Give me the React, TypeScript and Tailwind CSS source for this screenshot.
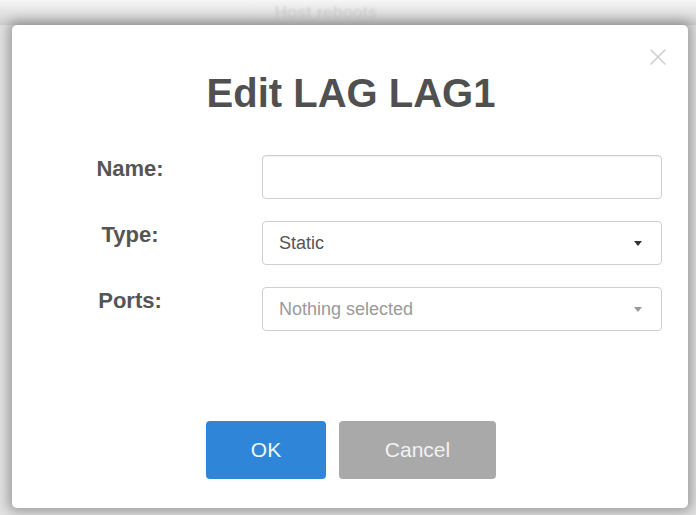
import React from "react";

function Caret({ muted }: { muted?: boolean }) {
  return (
    <span
      className={
        "inline-block h-0 w-0 border-x-[4px] border-t-[5px] border-x-transparent " +
        (muted ? "border-t-[#9a9a9a]" : "border-t-[#333]")
      }
    />
  );
}

function FieldRow({ label, children }: { label: string; children: React.ReactNode }) {
  return (
    <div className="flex items-start">
      <div className="w-[136px] ml-[50px] pt-[3px] text-center text-[22px] leading-[22px] font-bold text-[#555]">
        {label}
      </div>
      <div className="ml-[64px] w-[400px]">{children}</div>
    </div>
  );
}

export default function App() {
  return (
    <div
      className="relative w-[696px] h-[515px] overflow-hidden bg-[#e2e2e2] flex flex-col"
      style={{ fontFamily: '"Liberation Sans", Arial, sans-serif' }}
    >
      {/* page header showing through behind the dialog */}
      <div className="h-[25px] flex items-start justify-center pt-[4px] bg-gradient-to-b from-[#f6f6f6] to-[#cfcfcf]">
        <span className="text-[17px] leading-[18px] tracking-[0.5px] text-[#cdcdcd] blur-[1px] mr-[44px]">
          Host reboots
        </span>
      </div>

      <div className="relative ml-[12px] mr-[8px] h-[483px] bg-white rounded-[5px] shadow-[0_0_12px_4px_rgba(0,0,0,0.3)] flex flex-col">
        {/* close button */}
        <button className="absolute right-[20px] top-[22px] w-[20px] h-[20px] flex items-center justify-center">
          <svg width="18" height="18" viewBox="0 0 18 18">
            <path d="M2 2 L16 16 M16 2 L2 16" stroke="#cfcfcf" strokeWidth="1.6" strokeLinecap="round" />
          </svg>
        </button>

        <h1 className="pt-[48px] text-center text-[40px] leading-[40px] font-bold text-[#505050] ml-[2px]">
          Edit LAG LAG1
        </h1>

        <div className="mt-[42px] flex flex-col gap-[22px]">
          <FieldRow label="Name:">
            <div className="h-[44px] rounded-[4px] border border-[#cfcfcf] bg-white shadow-[inset_0_1px_1px_rgba(0,0,0,0.06)]" />
          </FieldRow>
          <FieldRow label="Type:">
            <div className="h-[44px] rounded-[4px] border border-[#cfcfcf] bg-white flex items-center justify-between pl-[16px] pr-[19px]">
              <span className="text-[18px] text-[#555]">Static</span>
              <Caret />
            </div>
          </FieldRow>
          <FieldRow label="Ports:">
            <div className="h-[44px] rounded-[4px] border border-[#cfcfcf] bg-white flex items-center justify-between pl-[16px] pr-[19px]">
              <span className="text-[18px] text-[#9a9a9a]">Nothing selected</span>
              <Caret muted />
            </div>
          </FieldRow>
        </div>

        <div className="mt-[90px] flex justify-center gap-[13px] ml-[2px]">
          <button className="w-[120px] h-[58px] rounded-[4px] bg-[#2f86d8] text-[#f0f6ff] text-[21px]">
            OK
          </button>
          <button className="w-[157px] h-[58px] rounded-[4px] bg-[#a9a9a9] text-[#f2f2f2] text-[21px]">
            Cancel
          </button>
        </div>
      </div>
    </div>
  );
}
